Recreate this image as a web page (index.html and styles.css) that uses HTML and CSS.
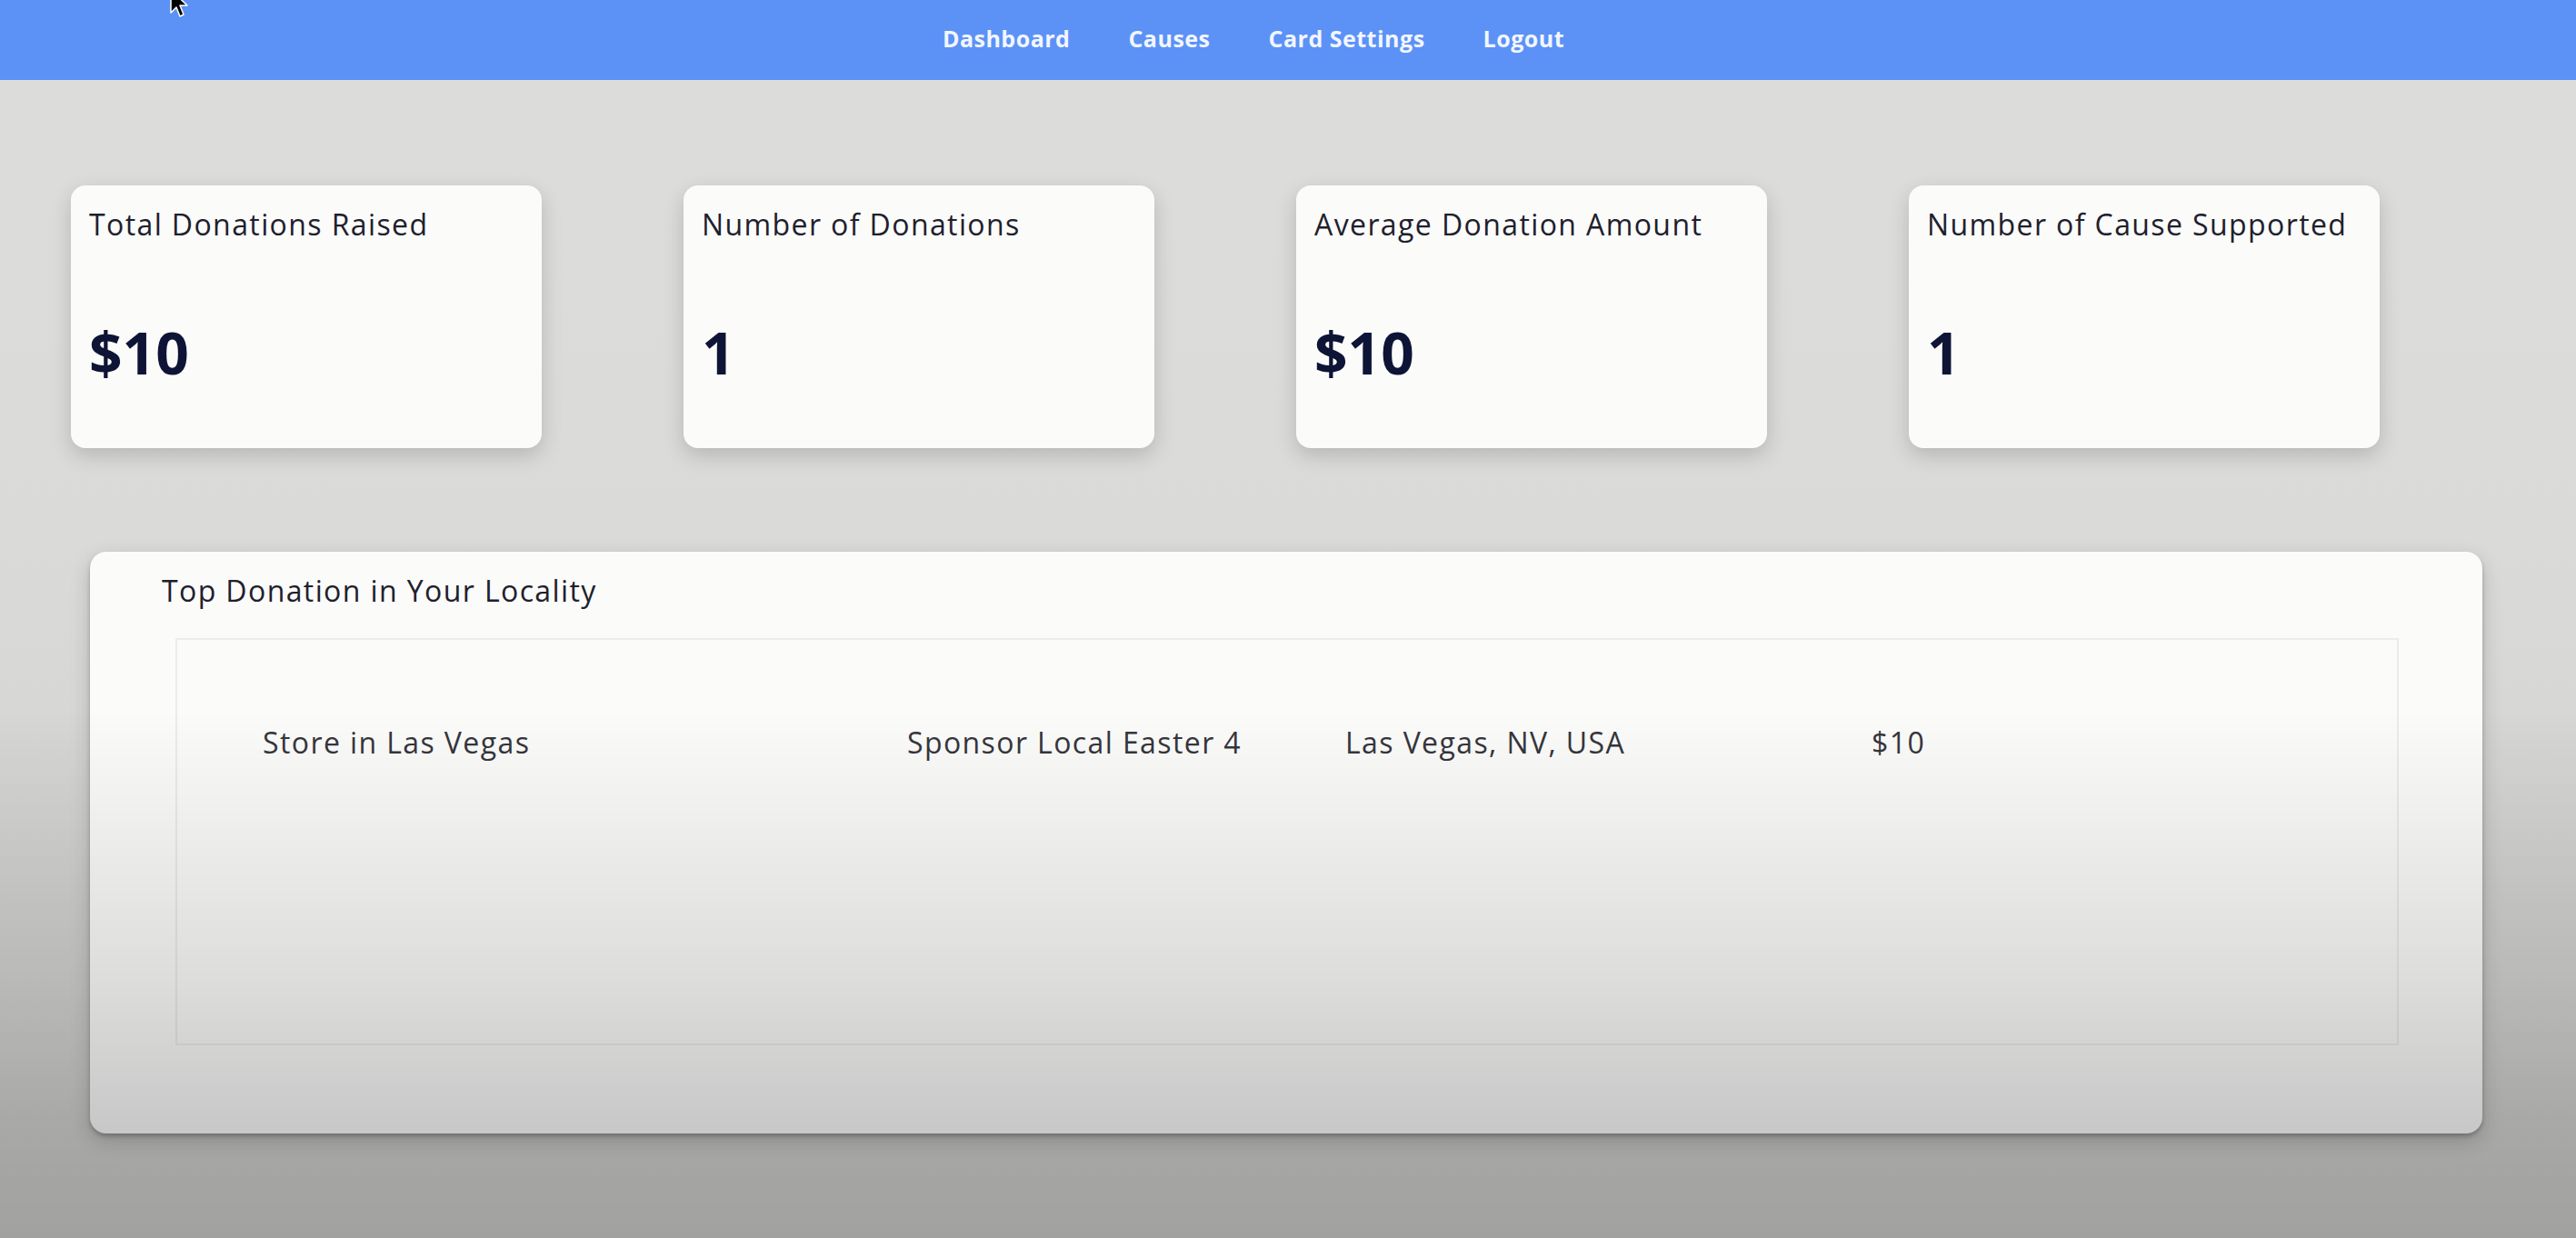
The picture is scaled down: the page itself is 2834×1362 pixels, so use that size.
FILE: index.html
```html
<!DOCTYPE html>
<html lang="en">
<head>
<meta charset="utf-8">
<title>Dashboard</title>
<link rel="stylesheet" href="styles.css">
</head>
<body>
<nav class="topbar">
  <a class="nav-link" href="#">Dashboard</a>
  <a class="nav-link" href="#">Causes</a>
  <a class="nav-link" href="#">Card Settings</a>
  <a class="nav-link" href="#">Logout</a>
</nav>
<main class="content">
  <section class="stats">
    <div class="stat-card">
      <h3 class="stat-title">Total Donations Raised</h3>
      <p class="stat-value">$10</p>
    </div>
    <div class="stat-card">
      <h3 class="stat-title">Number of Donations</h3>
      <p class="stat-value">1</p>
    </div>
    <div class="stat-card">
      <h3 class="stat-title">Average Donation Amount</h3>
      <p class="stat-value">$10</p>
    </div>
    <div class="stat-card">
      <h3 class="stat-title">Number of Cause Supported</h3>
      <p class="stat-value">1</p>
    </div>
  </section>
  <section class="panel">
    <h2 class="panel-title">Top Donation in Your Locality</h2>
    <div class="panel-box">
      <div class="donation-row">
        <span>Store in Las Vegas</span>
        <span>Sponsor Local Easter 4</span>
        <span>Las Vegas, NV, USA</span>
        <span>$10</span>
      </div>
    </div>
  </section>
</main>
<svg class="cursor" width="24" height="34" viewBox="0 0 24 34"><path d="M2 1 L2 26 L8 20 L12 30 L16 28 L12 18 L20 18 Z" fill="#000" stroke="#fff" stroke-width="1.5" stroke-linejoin="round"/></svg>
</body>
</html>
```
FILE: styles.css
```css
html, body {
  margin: 0;
  padding: 0;
}
body {
  min-height: 1362px;
  background: linear-gradient(to bottom, #dddddb 0, #dadad8 600px, #d3d3d1 1000px, #d2d2d0 1362px);
  font-family: "Open Sans", "Noto Sans", sans-serif;
  color: #1f1f2b;
  position: relative;
  overflow: hidden;
}
body::after {
  content: "";
  position: fixed;
  inset: 0;
  pointer-events: none;
  background: linear-gradient(to bottom, rgba(0,0,0,0) 0, rgba(0,0,0,0) 780px, rgba(0,0,0,0.12) 1085px, rgba(0,0,0,0.2) 1240px, rgba(0,0,0,0.23) 1362px);
}
.topbar {
  height: 88px;
  background: #5c92f6;
  display: flex;
  align-items: center;
  justify-content: center;
  gap: 64px;
  padding-right: 76px;
}
.nav-link {
  color: #f2f6ff;
  text-decoration: none;
  font-weight: 700;
  font-size: 25px;
  letter-spacing: 0.5px;
  line-height: 1;
  padding-bottom: 4px;
}
.content {
  display: flex;
  flex-direction: column;
}
.stats {
  display: flex;
  gap: 156px;
  padding: 116px 78px 0;
}
.stat-card {
  width: 518px;
  height: 289px;
  box-sizing: border-box;
  background: #fbfbfa;
  border-radius: 16px;
  padding: 23px 20px 0;
  box-shadow: 0 8px 22px rgba(0,0,0,0.17);
}
.stat-title {
  margin: 0;
  font-size: 32px;
  line-height: 40px;
  font-weight: 500;
  letter-spacing: 1.4px;
  color: #20202c;
}
.stat-value {
  margin: 89px 0 0;
  font-size: 64px;
  line-height: 64px;
  font-weight: 700;
  color: #0e1436;
}
.panel {
  margin: 114px 103px 0 99px;
  background: #fbfbfa;
  border-radius: 18px;
  padding: 23px 92px 97px 79px;
  box-shadow: 0 3px 4px rgba(0,0,0,0.22), 0 8px 22px rgba(0,0,0,0.18);
}
.panel-title {
  margin: 0;
  font-size: 32px;
  line-height: 40px;
  font-weight: 500;
  letter-spacing: 1.4px;
  color: #20202c;
}
.panel-box {
  margin: 32px 0 0 15px;
  height: 448px;
  box-sizing: border-box;
  border: 2px solid #ececea;
  padding: 93px 0 0 94px;
}
.donation-row {
  display: grid;
  grid-template-columns: 709px 482px 579px auto;
  font-size: 32px;
  line-height: 40px;
  font-weight: 500;
  letter-spacing: 1.4px;
  color: #36363c;
}
.cursor {
  position: absolute;
  left: 186px;
  top: -12px;
}
```
